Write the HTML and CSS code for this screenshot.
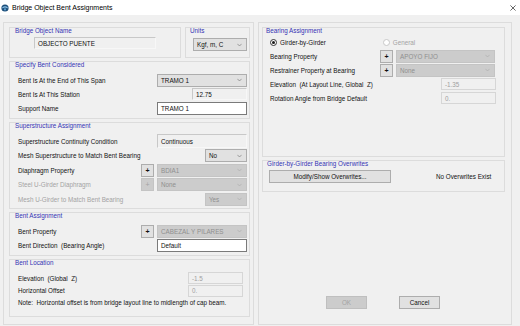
FILE: index.html
```html
<!DOCTYPE html>
<html lang="en">
<head>
    <meta charset="UTF-8">
    <title>Bridge Object Bent Assignments</title>
    <link rel="stylesheet" href="styles.css">
</head>
<body>
    <div class="titlebar">
        <svg class="app-icon" viewBox="0 0 8 8">
            <circle cx="4" cy="4" r="3.6" fill="#1d4f7a"/>
            <path d="M1.2 3.2 Q4 1.2 6.8 3.2 L6.4 4.4 Q4 2.8 1.6 4.4 Z" fill="#8fc3e8"/>
            <circle cx="4" cy="5.4" r="1.1" fill="#5fa0d0"/>
        </svg>
        <span class="title">Bridge Object Bent Assignments</span>
        <svg class="close" viewBox="0 0 7 7">
            <path d="M0.5 0.5 L6.5 6.5 M6.5 0.5 L0.5 6.5" stroke="#222" stroke-width="0.8"/>
        </svg>
    </div>

    <div class="dialog">
        <!-- coluna esquerda -->
        <div class="panel panel-left">
            <div class="top-row">
                <div class="group group-name">
                    <div class="group-title">Bridge Object Name</div>
                    <div class="readonly name-box">OBJECTO PUENTE</div>
                </div>
                <div class="group group-units">
                    <div class="group-title">Units</div>
                    <div class="combo units-combo"><span>Kgf, m, C</span><svg class="arrow" viewBox="0 0 6 4"><polyline points="0.5,0.6 3,3.2 5.5,0.6"/></svg></div>
                </div>
            </div>

            <div class="group group-span">
                <div class="group-title">Specify Bent Considered</div>
                <div class="row">
                    <span class="label">Bent Is At the End of This Span</span>
                    <div class="combo wide"><span>TRAMO 1</span><svg class="arrow" viewBox="0 0 6 4"><polyline points="0.5,0.6 3,3.2 5.5,0.6"/></svg></div>
                </div>
                <div class="row">
                    <span class="label">Bent Is At This Station</span>
                    <div class="readonly station">12.75</div>
                </div>
                <div class="row">
                    <span class="label">Support Name</span>
                    <div class="textbox wide">TRAMO 1</div>
                </div>
            </div>

            <div class="group group-super">
                <div class="group-title">Superstructure Assignment</div>
                <div class="row">
                    <span class="label">Superstructure Continuity Condition</span>
                    <div class="readonly wide tall">Continuous</div>
                </div>
                <div class="row">
                    <span class="label">Mesh Superstructure to Match Bent Bearing</span>
                    <div class="combo small"><span>No</span><svg class="arrow" viewBox="0 0 6 4"><polyline points="0.5,0.6 3,3.2 5.5,0.6"/></svg></div>
                </div>
                <div class="row">
                    <span class="label">Diaphragm Property</span>
                    <div class="plus">+</div>
                    <div class="combo wide disabled"><span>BDIA1</span><svg class="arrow" viewBox="0 0 6 4"><polyline points="0.5,0.6 3,3.2 5.5,0.6"/></svg></div>
                </div>
                <div class="row off">
                    <span class="label">Steel U-Girder Diaphragm</span>
                    <div class="plus disabled">+</div>
                    <div class="combo wide disabled"><span>None</span><svg class="arrow" viewBox="0 0 6 4"><polyline points="0.5,0.6 3,3.2 5.5,0.6"/></svg></div>
                </div>
                <div class="row off">
                    <span class="label">Mesh U-Girder to Match Bent Bearing</span>
                    <div class="combo small disabled"><span>Yes</span><svg class="arrow" viewBox="0 0 6 4"><polyline points="0.5,0.6 3,3.2 5.5,0.6"/></svg></div>
                </div>
            </div>

            <div class="group group-bent">
                <div class="group-title">Bent Assignment</div>
                <div class="row">
                    <span class="label">Bent Property</span>
                    <div class="plus">+</div>
                    <div class="combo wide disabled"><span>CABEZAL Y PILARES</span><svg class="arrow" viewBox="0 0 6 4"><polyline points="0.5,0.6 3,3.2 5.5,0.6"/></svg></div>
                </div>
                <div class="row">
                    <span class="label">Bent Direction&nbsp; (Bearing Angle)</span>
                    <div class="textbox wide">Default</div>
                </div>
            </div>

            <div class="group group-location">
                <div class="group-title">Bent Location</div>
                <div class="row short">
                    <span class="label">Elevation&nbsp; (Global&nbsp; Z)</span>
                    <div class="field-off loc-box">-1.5</div>
                </div>
                <div class="row short">
                    <span class="label">Horizontal Offset</span>
                    <div class="field-off loc-box">0.</div>
                </div>
                <div class="note">Note:&nbsp; Horizontal offset is from bridge layout line to midlength of cap beam.</div>
            </div>
        </div>

        <!-- coluna direita -->
        <div class="panel panel-right">
            <div class="group group-bearing">
                <div class="group-title">Bearing Assignment</div>
                <div class="radio-row">
                    <span class="radio checked"></span><span class="radio-text">Girder-by-Girder</span>
                    <span class="radio general"></span><span class="radio-text off">General</span>
                </div>
                <div class="row">
                    <span class="label">Bearing Property</span>
                    <div class="plus">+</div>
                    <div class="combo bearing-combo disabled"><span>APOYO FIJO</span><svg class="arrow" viewBox="0 0 6 4"><polyline points="0.5,0.6 3,3.2 5.5,0.6"/></svg></div>
                </div>
                <div class="row">
                    <span class="label">Restrainer Property at Bearing</span>
                    <div class="plus">+</div>
                    <div class="combo bearing-combo disabled"><span>None</span><svg class="arrow" viewBox="0 0 6 4"><polyline points="0.5,0.6 3,3.2 5.5,0.6"/></svg></div>
                </div>
                <div class="row">
                    <span class="label">Elevation&nbsp; (At Layout Line, Global&nbsp; Z)</span>
                    <div class="field-off bearing-box">-1.35</div>
                </div>
                <div class="row">
                    <span class="label">Rotation Angle from Bridge Default</span>
                    <div class="field-off bearing-box">0.</div>
                </div>
            </div>

            <div class="group group-overwrites">
                <div class="group-title">Girder-by-Girder Bearing Overwrites</div>
                <div class="overwrite-row">
                    <div class="button modify">Modify/Show Overwrites...</div>
                    <span class="status">No Overwrites Exist</span>
                </div>
            </div>

            <div class="actions">
                <div class="button disabled">OK</div>
                <div class="button">Cancel</div>
            </div>
        </div>
    </div>
</body>
</html>
```

FILE: styles.css
```css
body {
    margin: 0;
    width: 520px;
    height: 326px;
    overflow: hidden;
    background-color: #f0f0f0;
    font-family: 'Liberation Sans', Arial, sans-serif;
    font-size: 6.3px;
    color: #111;
}

/* Barra de título */
.titlebar {
    height: 15px;
    background-color: #ffffff;
    display: flex;
    align-items: center;
    padding-left: 1px;
}

.app-icon {
    width: 8px;
    height: 8px;
    margin-right: 3px;
}

.title {
    font-size: 7px;
    color: #000;
}

.close {
    width: 6px;
    height: 6px;
    margin-left: auto;
    margin-right: 4px;
}

/* Corpo do diálogo */
.dialog {
    display: flex;
    gap: 4px;
    padding: 7px 0 0 3px;
}

.panel {
    border: 1px solid #dcdcdc;
    box-sizing: border-box;
    height: 303px;
    display: flex;
    flex-direction: column;
}

.panel-left {
    width: 251px;
    padding: 4px 3px 0 5px;
    gap: 3px;
}

.panel-right {
    width: 254px;
    padding: 4px 6px 15px 3px;
    gap: 3px;
}

.top-row {
    display: flex;
    gap: 4px;
}

/* Grupos */
.group {
    border: 1px solid #dcdcdc;
    box-sizing: border-box;
    padding: 0 2px 0 8px;
}

.group-title {
    color: #3434b4;
    height: 8px;
    line-height: 8px;
    margin-left: -3px;
    margin-top: -1px;
}

.group-name { width: 172px; height: 31px; }
.group-units { width: 65px; height: 31px; padding-left: 3px; }
.group-span { height: 58px; }
.group-super { height: 87px; }
.group-bent { height: 44px; }
.group-location { height: 58px; }

.group-span .group-title { margin-bottom: 4px; }
.group-super .group-title { margin-bottom: 4px; }
.group-bent .group-title { margin-bottom: 4px; }
.group-location .group-title { margin-bottom: 5px; }

.group-units .group-title { margin-left: 1px; }

.row {
    display: flex;
    align-items: center;
    height: 14px;
}

.group-super .row { height: 14.5px; }

.row.short { height: 12.5px; }

.label {
    flex: 1;
    white-space: nowrap;
}

.row.off .label,
.radio-text.off {
    color: #a3a3a3;
}

/* Controles */
.combo,
.textbox,
.readonly,
.field-off {
    box-sizing: border-box;
    height: 13px;
    display: flex;
    align-items: center;
    padding-left: 3px;
    white-space: nowrap;
}

.combo {
    background-color: #e1e1e1;
    border: 1px solid #adadad;
    justify-content: space-between;
    padding-right: 4px;
}

.combo.disabled {
    background-color: #cccccc;
    border-color: #c4c4c4;
    color: #8f8f8f;
}

.arrow {
    width: 5px;
    height: 4px;
    fill: none;
    stroke: #6b6b6b;
    stroke-width: 0.7;
}

.combo.disabled .arrow {
    stroke: #a8a8a8;
}

.textbox {
    background-color: #ffffff;
    border: 1px solid #7a7a7a;
}

.readonly {
    background-color: #f0f0f0;
    border-top: 1px solid #c8c8c8;
    border-left: 1px solid #c8c8c8;
    border-bottom: 1px solid #f7f7f7;
    border-right: 1px solid #f7f7f7;
}

.field-off {
    background-color: #f0f0f0;
    border: 1px solid #d6d6d6;
    color: #a0a0a0;
    height: 12px;
}

.wide { width: 90px; }
.small { width: 42px; }
.tall { height: 14px; }
.station { width: 55px; height: 12px; }
.loc-box { width: 55px; margin-right: 4px; }

.name-box {
    width: 122px;
    height: 12px;
    margin: 2px 0 0 16px;
}

.units-combo {
    width: 54px;
    margin: 3px 0 0 4px;
}

.plus {
    box-sizing: border-box;
    width: 13px;
    height: 13px;
    margin-right: 3px;
    background-color: #e1e1e1;
    border: 1px solid #adadad;
    display: flex;
    align-items: center;
    justify-content: center;
    font-weight: bold;
    font-size: 7px;
}

.plus.disabled {
    background-color: #cccccc;
    border-color: #c4c4c4;
    color: #a3a3a3;
    font-weight: normal;
}

.note {
    margin-top: 2px;
}

/* Apoios */
.group-bearing {
    height: 130px;
    padding-left: 7px;
    padding-right: 9px;
}

.group-bearing .group-title { margin-left: -4px; }

.radio-row {
    display: flex;
    align-items: center;
    height: 12px;
    margin: 1px 0 1px 0;
}

.radio {
    box-sizing: border-box;
    width: 7px;
    height: 7px;
    border-radius: 50%;
    border: 1px solid #333;
    background-color: #fff;
    position: relative;
}

.radio.checked::after {
    content: '';
    position: absolute;
    left: 1px;
    top: 1px;
    width: 3px;
    height: 3px;
    border-radius: 50%;
    background-color: #1a1a1a;
}

.radio.general {
    margin-left: 57px;
    border-color: #c8c8c8;
}

.radio-text {
    margin-left: 3px;
}

.bearing-combo { width: 99px; }

.bearing-box {
    width: 55px;
    margin-right: -1px;
}

.group-overwrites {
    height: 32px;
    padding-left: 6px;
}

.group-overwrites .group-title { margin-left: -2px; }

.overwrite-row {
    display: flex;
    align-items: center;
    margin-top: 2px;
}

.status {
    margin-left: 45px;
}

.button {
    box-sizing: border-box;
    width: 41px;
    height: 13px;
    background-color: #e1e1e1;
    border: 1px solid #adadad;
    display: flex;
    align-items: center;
    justify-content: center;
}

.button.modify {
    width: 122px;
}

.button.disabled {
    background-color: #cccccc;
    border-color: #bfbfbf;
    color: #a3a3a3;
}

.actions {
    margin-top: auto;
    display: flex;
    gap: 32px;
    padding-left: 64px;
}
```
